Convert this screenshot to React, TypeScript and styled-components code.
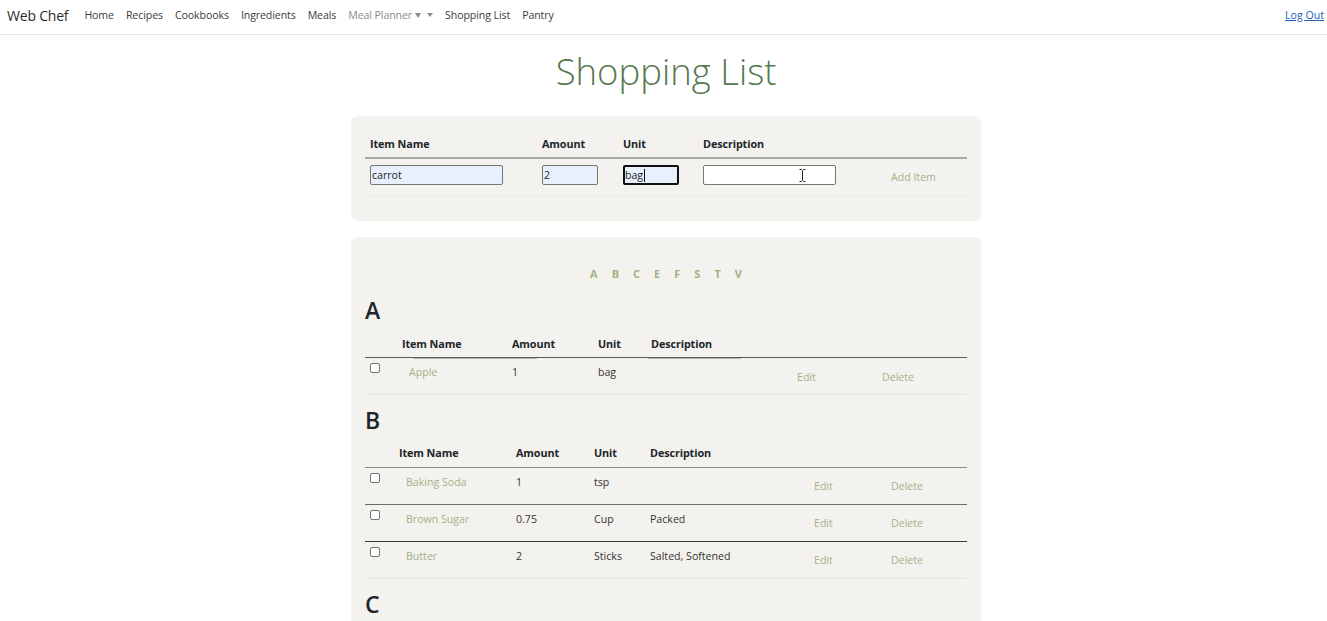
import React from "react";
import styled, { createGlobalStyle } from "styled-components";

const GlobalStyle = createGlobalStyle`
  html, body {
    margin: 0;
    height: 100%;
    overflow: hidden;
    background: #fff;
    font-family: "Open Sans", "Noto Sans", sans-serif;
    color: #212529;
  }
`;

const Navbar = styled.nav`
  display: flex;
  align-items: center;
  height: 30px;
  padding: 0 3px 4px 7px;
  border-bottom: 1px solid #e6e6e6;
`;

const Brand = styled.a`
  font-size: 14px;
  letter-spacing: -0.2px;
  color: #2b2b2b;
  margin-right: 16px;
`;

const NavLinks = styled.div`
  display: flex;
  align-items: center;
  gap: 12px;
  flex: 1;
`;

const NavLink = styled.a<{ $muted?: boolean }>`
  display: flex;
  align-items: center;
  font-size: 10.6px;
  letter-spacing: -0.1px;
  color: ${(p) => (p.$muted ? "#8c8c8c" : "#3c3c3c")};
`;

const Caret = styled.span<{ $wide?: boolean }>`
  width: 0;
  height: 0;
  margin-left: ${(p) => (p.$wide ? "3px" : "6px")};
  border-top: ${(p) => (p.$wide ? "5px" : "4px")} solid #8c8c8c;
  border-left: ${(p) => (p.$wide ? "3.5px" : "3px")} solid transparent;
  border-right: ${(p) => (p.$wide ? "3.5px" : "3px")} solid transparent;
`;

const LogOut = styled.a`
  font-size: 10.6px;
  color: #1b62b5;
  text-decoration: underline;
`;

const Main = styled.main`
  padding-left: 5px;
`;

const Title = styled.h1`
  margin: 13px 0 22px;
  text-align: center;
  font-size: 36.5px;
  line-height: 46px;
  font-weight: 300;
  color: #55794f;
`;

const Card = styled.section<{ $bottom?: string }>`
  width: 602px;
  margin: 0 auto 16px;
  padding: 14px 14px ${(p) => p.$bottom ?? "0"};
  background: #f3f2ee;
  border-radius: 7px;
`;

const Table = styled.table`
  width: 602px;
  table-layout: fixed;
  border-collapse: collapse;
`;

const Col = styled.col<{ $w: number }>`
  width: ${(p) => p.$w}px;
`;

const Head = styled.th<{ $line: string; $height: number; $pad?: number; $thick?: boolean }>`
  position: relative;
  height: ${(p) => p.$height}px;
  padding: 0 5px ${(p) => p.$pad ?? 7}px;
  box-sizing: border-box;
  vertical-align: bottom;
  text-align: left;
  font-size: 10.8px;
  font-weight: 700;
  letter-spacing: -0.1px;
  color: #212529;
  border-bottom: ${(p) => (p.$thick ? 2 : 1)}px solid ${(p) => p.$line};
`;

/* faint second rule that sits under a few header cells */
const HeadShadow = styled.span<{ $left: number; $w: number }>`
  position: absolute;
  left: ${(p) => p.$left}px;
  bottom: -2px;
  width: ${(p) => p.$w}px;
  height: 1px;
  background: #b4b4b0;
`;

const Cell = styled.td<{ $line: string; $height: number }>`
  height: ${(p) => p.$height}px;
  padding: 7px 5px 0;
  box-sizing: border-box;
  vertical-align: top;
  font-size: 10.6px;
  line-height: 15px;
  color: #33342f;
  border-bottom: 1px solid ${(p) => p.$line};
`;

const ItemLink = styled.a`
  margin-left: 7px;
  color: #a3b38a;
`;

const ActionLink = styled.a<{ $top: number }>`
  display: block;
  margin: ${(p) => p.$top}px 0 0 5px;
  color: #a3b38a;
`;

const Check = styled.input.attrs({ type: "checkbox" })`
  display: block;
  width: 10px;
  height: 10px;
  margin: -2px 0 0 0;
  appearance: none;
  background: #fff;
  border: 1px solid #767676;
  border-radius: 2px;
`;

const InputCell = styled(Cell)`
  padding-top: 6px;
`;

const InputWrap = styled.div<{ $w: number }>`
  position: relative;
  width: ${(p) => p.$w}px;
`;

const TextInput = styled.input<{ $w: number; $focus?: boolean; $filled?: boolean }>`
  display: block;
  box-sizing: border-box;
  width: ${(p) => p.$w}px;
  height: 20px;
  padding: 0 ${(p) => (p.$focus ? 0 : 1)}px;
  font: inherit;
  font-size: 10.6px;
  color: #222;
  background: ${(p) => (p.$filled ? "#e8f0fe" : "#fff")};
  border: ${(p) => (p.$focus ? "2px solid #101010" : "1px solid #767676")};
  border-radius: 2px;
  outline: none;
`;

const TextCaret = styled.span`
  position: absolute;
  left: 21px;
  top: 4px;
  width: 1px;
  height: 13px;
  background: #111;
`;

const Pointer = styled.svg`
  position: absolute;
  left: 96px;
  top: 4px;
`;

const AddLink = styled.a`
  display: block;
  margin: 5px 0 0 5px;
  color: #a3b38a;
`;

const Alphabet = styled.div`
  display: flex;
  justify-content: center;
  gap: 14px;
  padding-top: 15px;
  height: 29px;
`;

const Letter = styled.a`
  font-size: 11px;
  font-weight: 700;
  line-height: 15px;
  color: #a1b27e;
`;

const SectionHeading = styled.h2`
  margin: 0;
  font-size: 23px;
  line-height: 30px;
  font-weight: 600;
  color: #212529;
`;

type Item = { name: string; amount: string; unit: string; description: string };
type Layout = {
  cols: number[];
  lines: string[];
  head: string;
  headHeight: number;
  headPad: number;
  actionTop: number;
  shadows?: boolean;
};

const letters = ["A", "B", "C", "E", "F", "S", "T", "V"];

const sections: { letter: string; gap: number; layout: Layout; items: Item[] }[] = [
  {
    letter: "A",
    gap: 10,
    layout: {
      cols: [32, 110, 86, 53, 141, 85, 95],
      head: "#5a5a58",
      lines: ["#e7e6e2"],
      headHeight: 33,
      headPad: 6,
      actionTop: 5,
      shadows: true,
    },
    items: [{ name: "Apple", amount: "1", unit: "bag", description: "" }],
  },
  {
    letter: "B",
    gap: 10,
    layout: {
      cols: [29, 117, 78, 56, 159, 77, 86],
      head: "#8d8d89",
      lines: ["#6a6a68", "#3c3c3a", "#e7e6e2"],
      headHeight: 32,
      headPad: 7,
      actionTop: 4,
    },
    items: [
      { name: "Baking Soda", amount: "1", unit: "tsp", description: "" },
      { name: "Brown Sugar", amount: "0.75", unit: "Cup", description: "Packed" },
      { name: "Butter", amount: "2", unit: "Sticks", description: "Salted, Softened" },
    ],
  },
];

const GroupTable = ({ layout, items }: { layout: Layout; items: Item[] }) => {
  const headProps = { $line: layout.head, $height: layout.headHeight, $pad: layout.headPad };
  return (
    <Table>
      <colgroup>
        {layout.cols.map((w, i) => (
          <Col key={i} $w={w} />
        ))}
      </colgroup>
      <thead>
        <tr>
          <Head {...headProps} />
          <Head {...headProps}>
            Item Name
            {layout.shadows && <HeadShadow $left={16} $w={124} />}
          </Head>
          <Head {...headProps}>Amount</Head>
          <Head {...headProps}>Unit</Head>
          <Head {...headProps}>
            Description
            {layout.shadows && <HeadShadow $left={2} $w={93} />}
          </Head>
          <Head {...headProps} />
          <Head {...headProps} />
        </tr>
      </thead>
      <tbody>
        {items.map((item, i) => {
          const cellProps = { $line: layout.lines[i], $height: 37 };
          return (
            <tr key={item.name}>
              <Cell {...cellProps}>
                <Check />
              </Cell>
              <Cell {...cellProps}>
                <ItemLink>{item.name}</ItemLink>
              </Cell>
              <Cell {...cellProps}>{item.amount}</Cell>
              <Cell {...cellProps}>{item.unit}</Cell>
              <Cell {...cellProps}>{item.description}</Cell>
              <Cell {...cellProps}>
                <ActionLink $top={layout.actionTop}>Edit</ActionLink>
              </Cell>
              <Cell {...cellProps}>
                <ActionLink $top={layout.actionTop}>Delete</ActionLink>
              </Cell>
            </tr>
          );
        })}
      </tbody>
    </Table>
  );
};

const SectionGap = styled.div<{ $h: number }>`
  height: ${(p) => p.$h}px;
`;

export default function App() {
  return (
    <>
      <GlobalStyle />
      <Navbar>
        <Brand>Web Chef</Brand>
        <NavLinks>
          <NavLink>Home</NavLink>
          <NavLink>Recipes</NavLink>
          <NavLink>Cookbooks</NavLink>
          <NavLink>Ingredients</NavLink>
          <NavLink>Meals</NavLink>
          <NavLink $muted>
            Meal Planner
            <Caret $wide />
            <Caret />
          </NavLink>
          <NavLink>Shopping List</NavLink>
          <NavLink>Pantry</NavLink>
        </NavLinks>
        <LogOut>Log Out</LogOut>
      </Navbar>

      <Main>
        <Title>Shopping List</Title>

        <Card $bottom="25px">
          <Table>
            <colgroup>
              <Col $w={172} />
              <Col $w={81} />
              <Col $w={80} />
              <Col $w={183} />
              <Col $w={86} />
            </colgroup>
            <thead>
              <tr>
                {["Item Name", "Amount", "Unit", "Description", ""].map((h, i) => (
                  <Head key={i} $line="#a9a9a4" $height={28} $pad={6} $thick>
                    {h}
                  </Head>
                ))}
              </tr>
            </thead>
            <tbody>
              <tr>
                <InputCell $line="#e9e8e4" $height={37}>
                  <TextInput $w={133} $filled defaultValue="carrot" />
                </InputCell>
                <InputCell $line="#e9e8e4" $height={37}>
                  <TextInput $w={56} $filled defaultValue="2" />
                </InputCell>
                <InputCell $line="#e9e8e4" $height={37}>
                  <InputWrap $w={56}>
                    <TextInput $w={56} $filled $focus defaultValue="bag" />
                    <TextCaret />
                  </InputWrap>
                </InputCell>
                <InputCell $line="#e9e8e4" $height={37}>
                  <InputWrap $w={133}>
                    <TextInput $w={133} />
                    <Pointer width="7" height="13" viewBox="0 0 7 13" fill="none" stroke="#222" strokeWidth="1">
                      <path d="M0.5 0.5h2l1 1 1-1h2M3.5 1.5v10M0.5 12.5h2l1-1 1 1h2" />
                    </Pointer>
                  </InputWrap>
                </InputCell>
                <InputCell $line="#e9e8e4" $height={37}>
                  <AddLink>Add Item</AddLink>
                </InputCell>
              </tr>
            </tbody>
          </Table>
        </Card>

        <Card $bottom="40px">
          <Alphabet>
            {letters.map((l) => (
              <Letter key={l}>{l}</Letter>
            ))}
          </Alphabet>
          {sections.map((s) => (
            <div key={s.letter}>
              <SectionHeading>{s.letter}</SectionHeading>
              <GroupTable layout={s.layout} items={s.items} />
              <SectionGap $h={s.gap} />
            </div>
          ))}
          <SectionHeading>C</SectionHeading>
        </Card>
      </Main>
    </>
  );
}
